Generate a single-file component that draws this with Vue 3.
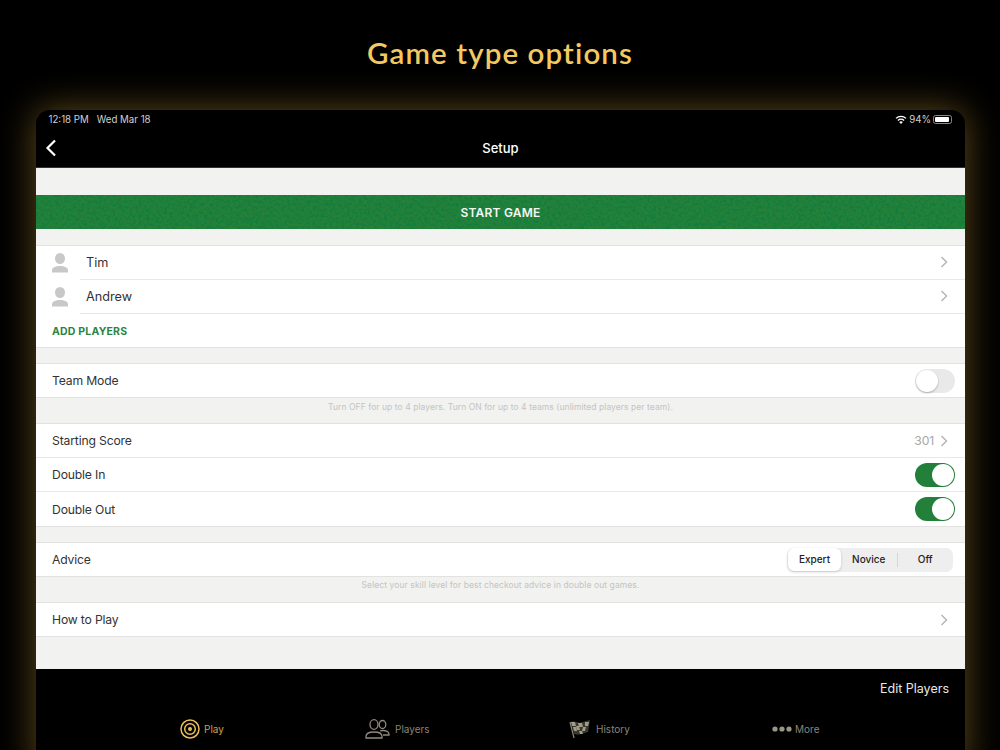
<script setup>
const tabs = [
  { key: 'play', label: 'Play', active: true },
  { key: 'players', label: 'Players' },
  { key: 'history', label: 'History' },
  { key: 'more', label: 'More' },
]
</script>

<template>
  <div class="page">
    <h1 class="headline">Game type options</h1>
    <div class="tablet">
      <div class="status">
        <span class="status-left"><span>12:18 PM</span><span>Wed Mar 18</span></span>
        <span class="status-right">
          <svg width="12" height="9" viewBox="0 0 12 9"><path d="M6 9 4.2 7.1a2.6 2.6 0 0 1 3.6 0Z" fill="#fff"/><path d="M2.9 5.5a4.4 4.4 0 0 1 6.2 0M1 3.4a7.1 7.1 0 0 1 10 0" fill="none" stroke="#fff" stroke-width="1.3"/></svg>
          <span>94%</span>
          <span class="battery"><span class="battery-fill"></span></span>
        </span>
      </div>
      <div class="navbar">
        <svg class="back" width="12" height="18" viewBox="0 0 12 18"><path d="M10 1.5 2.5 9l7.5 7.5" fill="none" stroke="#fff" stroke-width="2.2"/></svg>
        <span class="nav-title">Setup</span>
      </div>

      <div class="content">
        <div class="start">
          <svg class="felt" width="929" height="34">
            <filter id="felt-noise" x="0" y="0" width="100%" height="100%">
              <feTurbulence type="fractalNoise" baseFrequency="0.35" numOctaves="3" seed="7"/>
              <feColorMatrix type="matrix" values="0 0 0 0 0  0 0 0 0 .2  0 0 0 0 .05  1.8 0 0 0 -.72"/>
            </filter>
            <rect width="929" height="34" filter="url(#felt-noise)"/>
          </svg>
          <span class="start-label">START GAME</span>
        </div>

        <section class="group g-players">
          <div class="player">
            <svg class="avatar" width="18" height="20" viewBox="0 0 18 20"><ellipse cx="9" cy="5.5" rx="5" ry="5.5" fill="#c8c8c8"/><path d="M1 19.5v-2.2c0-2.6 3.6-4.3 8-4.3s8 1.700 8 4.300v2.200Z" fill="#c8c8c8"/></svg>
            <div class="player-main"><span>Tim</span><svg class="chev" width="8" height="12" viewBox="0 0 8 12"><path d="M1.500 1 6.500 6l-5 5" fill="none" stroke="#b3b3b3" stroke-width="1.400"/></svg></div>
          </div>
          <div class="player">
            <svg class="avatar" width="18" height="20" viewBox="0 0 18 20"><ellipse cx="9" cy="5.500" rx="5" ry="5.500" fill="#c8c8c8"/><path d="M1 19.500v-2.200c0-2.600 3.600-4.300 8-4.300s8 1.700 8 4.300v2.200Z" fill="#c8c8c8"/></svg>
            <div class="player-main"><span>Andrew</span><svg class="chev" width="8" height="12" viewBox="0 0 8 12"><path d="M1.500 1 6.500 6l-5 5" fill="none" stroke="#b3b3b3" stroke-width="1.400"/></svg></div>
          </div>
          <div class="add">ADD PLAYERS</div>
        </section>

        <section class="group g-team">
          <div class="row"><span>Team Mode</span><span class="switch"><span class="knob"></span></span></div>
        </section>
        <p class="note note-team">Turn OFF for up to 4 players. Turn ON for up to 4 teams (unlimited players per team).</p>

        <section class="group">
          <div class="row line"><span>Starting Score</span><span class="value">301<svg class="chev" width="8" height="12" viewBox="0 0 8 12"><path d="M1.500 1 6.500 6l-5 5" fill="none" stroke="#b3b3b3" stroke-width="1.400"/></svg></span></div>
          <div class="row line"><span>Double In</span><span class="switch on"><span class="knob"></span></span></div>
          <div class="row tall"><span>Double Out</span><span class="switch on"><span class="knob"></span></span></div>
        </section>

        <section class="group g-advice">
          <div class="row"><span>Advice</span>
            <div class="segments">
              <span class="seg selected">Expert</span>
              <span class="seg">Novice</span>
              <span class="divider"></span>
              <span class="seg">Off</span>
            </div>
          </div>
        </section>
        <p class="note note-advice">Select your skill level for best checkout advice in double out games.</p>

        <section class="group">
          <div class="row"><span>How to Play</span><svg class="chev" width="8" height="12" viewBox="0 0 8 12"><path d="M1.500 1 6.500 6l-5 5" fill="none" stroke="#b3b3b3" stroke-width="1.400"/></svg></div>
        </section>
      </div>

      <div class="footer">
        <div class="edit">Edit Players</div>
        <div class="tabs">
          <div v-for="t in tabs" :key="t.key" class="tab" :class="[t.key, { active: t.active }]">
            <svg v-if="t.key === 'play'" width="20" height="20" viewBox="0 0 20 20" fill="none" stroke="#edbe58"><circle cx="10" cy="10" r="9" stroke-width="1.500"/><circle cx="10" cy="10" r="5.300" stroke-width="1.500"/><circle cx="10" cy="10" r="2" fill="#edbe58" stroke="none"/></svg>
            <svg v-else-if="t.key === 'players'" width="25" height="20" viewBox="0 0 25 20" fill="none" stroke="#8f8a7c" stroke-width="1.300"><ellipse cx="9" cy="5.500" rx="4" ry="4.800"/><ellipse cx="17.500" cy="5.500" rx="3.300" ry="4"/><path d="M1 19v-1.500c0-2.800 3.500-4.500 8-4.500s8 1.700 8 4.500V19Z"/><path d="M15 12c1-.4 2-.5 3-.5 3 0 6 1.300 6 3.600V16h-6"/></svg>
            <svg v-else-if="t.key === 'history'" width="22" height="20" viewBox="0 0 22 20"><path d="M1 3 5 19" stroke="#8f8a7c" stroke-width="1.200"/><path d="M2 3c4-1.500 7 1.500 10 .500s6-1.500 9-2.500l-2 12c-3 1-6 1.500-9 2.500-3 .5-4-.5-5-.5Z" fill="#3a382f"/><path d="M2 3h4l1 4H3Zm7 1h4l1 4H10Zm7-1h4l-1 4h-3ZM7 7h3l1 4H8ZM14 8h3l-1 4h-3ZM4 8h3l1 4H5Zm6 4h3l1 3h-3Z" fill="#a09a8a"/></svg>
            <svg v-else width="20" height="6" viewBox="0 0 20 6" fill="#9a9585"><circle cx="3" cy="3" r="2.600"/><circle cx="10" cy="3" r="2.600"/><circle cx="17" cy="3" r="2.600"/></svg>
            <span>{{ t.label }}</span>
          </div>
        </div>
        <div class="home"></div>
      </div>
    </div>
  </div>
</template>

<style>
html, body { margin: 0; background: #000; }
</style>

<style scoped>
.page {
  width: 1000px;
  height: 750px;
  overflow: hidden;
  background: #000;
  font-family: Inter, "Liberation Sans", sans-serif;
  color: #333;
  box-sizing: border-box;
}
.headline {
  margin: 0;
  height: 110px;
  box-sizing: border-box;
  padding-top: 33px;
  text-align: center;
  font: 600 29.5px/40px Lato, "Open Sans", sans-serif;
  letter-spacing: 1.1px;
  color: #f3c960;
}
.tablet {
  width: 929px;
  height: 660px;
  margin-left: 36px;
  border-radius: 14px 14px 0 0;
  background: #000;
  box-shadow: 0 0 36px 1px rgba(150, 115, 40, .62);
  overflow: hidden;
  display: flex;
  flex-direction: column;
}
.status {
  height: 18px;
  flex: none;
  display: flex;
  justify-content: space-between;
  align-items: center;
  padding: 0 13px 0 12.500px;
  font-size: 9.700px;
  color: #d0d0d0;
}
.status-left { display: flex; gap: 8px; }
.status-right { display: flex; align-items: center; gap: 2px; }
.battery {
  border: 1px solid #888;
  border-radius: 2.500px;
  padding: 1px;
  box-sizing: content-box;
  display: block;
  width: 15px;
  height: 5px;
}
.battery-fill { display: block; height: 100%; width: 95%; background: #fff; border-radius: 1px; }
.navbar {
  height: 39px;
  flex: none;
  position: relative;
  display: flex;
  align-items: center;
  justify-content: center;
  border-bottom: 1px solid #333;
  box-sizing: content-box;
}
.back { position: absolute; left: 9px; top: 11px; }
.nav-title { color: #fff; font-size: 13px; font-weight: 500; }
.content {
  height: 501px;
  flex: none;
  background: #f2f2f0;
  padding-top: 27px;
  box-sizing: border-box;
}
.start {
  height: 34px;
  position: relative;
  display: flex;
  align-items: center;
  justify-content: center;
  background-color: #268039;
}
.felt { position: absolute; left: 0; top: 0; display: block; }
.start-label {
  position: relative;
  color: #f4f7f3;
  font-size: 12px;
  font-weight: 600;
  letter-spacing: .2px;
}
.group {
  background: #fff;
  border-top: 1px solid #e2e2e0;
  border-bottom: 1px solid #e2e2e0;
}
.g-players { margin-top: 16px; }
.g-team { margin-top: 15px; }
.g-advice { margin-top: 15px; }
.player { height: 34px; display: flex; align-items: center; }
.avatar { margin-left: 15px; flex: none; }
.player-main {
  margin-left: 11px;
  flex: 1;
  height: 34px;
  box-sizing: border-box;
  border-bottom: 1px solid #e8e8e6;
  display: flex;
  align-items: center;
  justify-content: space-between;
  padding: 0 17px 0 6px;
  font-size: 12.700px;
}
.player-main .chev { margin-bottom: 1px; }
.add {
  height: 33px;
  box-sizing: border-box;
  padding: 1px 0 0 16px;
  display: flex;
  align-items: center;
  color: #2b8440;
  font-size: 10.500px;
  font-weight: 700;
  letter-spacing: .2px;
}
.row {
  height: 33px;
  display: flex;
  align-items: center;
  justify-content: space-between;
  padding: 0 10px 0 16px;
  font-size: 12.200px;
  letter-spacing: -.17px;
}
.row.tall { height: 34px; }
.row > .chev { margin-right: 7px; }
.line { border-bottom: 1px solid #e8e8e6; }
.value {
  display: flex;
  align-items: center;
  gap: 6px;
  color: #a8a8a8;
  padding-right: 7px;
}
.switch {
  width: 40px;
  height: 24px;
  border-radius: 12px;
  background: #e9e9ea;
  position: relative;
  display: block;
}
.knob {
  position: absolute;
  left: 1px;
  top: 1px;
  width: 22px;
  height: 22px;
  border-radius: 50%;
  background: #fff;
  box-shadow: 0 1px 2px rgba(0, 0, 0, .28);
}
.switch.on { background: #23803a; }
.switch.on .knob { left: 17px; box-shadow: none; }
.note {
  margin: 0;
  height: 25px;
  box-sizing: border-box;
  padding-top: 4px;
  text-align: center;
  font-size: 8.500px;
  line-height: 11px;
  letter-spacing: .06px;
  color: #c4c4c2;
}
.note-advice { padding-top: 3px; letter-spacing: .08px; }
.segments {
  width: 166px;
  height: 24px;
  background: #eeeeef;
  border-radius: 7px;
  display: flex;
  align-items: center;
  font-size: 10px;
  letter-spacing: 0;
  font-weight: 500;
  color: #222;
  margin-right: 2px;
}
.seg { flex: 1; text-align: center; line-height: 22px; padding-bottom: 1px; }
.selected {
  flex: none;
  width: 53px;
  margin-left: 1px;
  background: #fff;
  border-radius: 6px;
  box-shadow: 0 1px 3px rgba(0, 0, 0, .18);
}
.divider { width: 1px; height: 14px; background: #d6d6d6; }
.footer {
  flex: 1;
  background: #000;
  position: relative;
}
.edit {
  text-align: right;
  padding: 12px 16px 0 0;
  color: #e8e8e8;
  font-size: 12.500px;
  line-height: 16px;
}
.tabs {
  position: absolute;
  left: 0;
  right: 0;
  top: 50px;
  height: 20px;
}
.tab {
  position: absolute;
  top: 0;
  height: 20px;
  display: flex;
  align-items: center;
  gap: 4px;
  font-size: 10px;
  color: #8a8578;
}
.tab.play { left: 144px; color: #c9a24c; }
.tab.players { left: 329px; gap: 5px; }
.tab.history { left: 533px; gap: 5px; }
.tab.more { left: 736px; gap: 3px; }
.home {
  position: absolute;
  left: 344px;
  bottom: -3px;
  width: 241px;
  height: 4px;
  border-radius: 2px;
  background: #555;
}
</style>
